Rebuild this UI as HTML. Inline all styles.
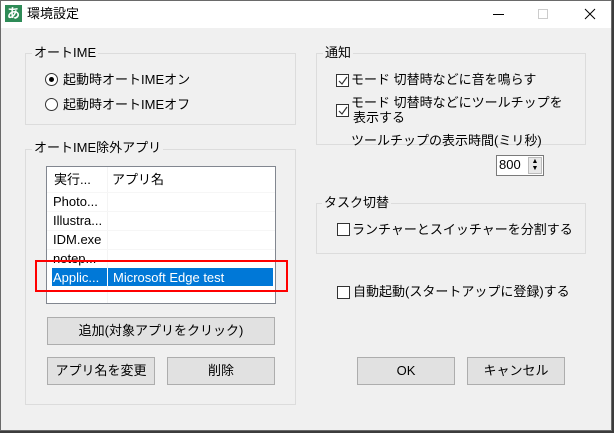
<!DOCTYPE html>
<html><head><meta charset="utf-8"><style>
*{margin:0;padding:0;box-sizing:border-box}
body{width:614px;height:433px;background:#3c3c3c;position:relative;overflow:hidden;font-family:"Liberation Sans","Noto Sans CJK JP",sans-serif;font-size:13px;color:#000}
.win{position:absolute;left:0;top:0;width:612px;height:431px;background:#f0f0f0;border:1px solid #6a6a6a}
.title{position:absolute;left:0;top:0;width:610px;height:27px;background:#fff}
.a{position:absolute;}
.grp{position:absolute;border:1px solid #dcdcdc}
.lbl{position:absolute;background:#f0f0f0;padding:0 2px;line-height:16px;white-space:nowrap}
.t{position:absolute;white-space:nowrap;line-height:16px}
.btn{position:absolute;background:#e1e1e1;border:1px solid #adadad;text-align:center;line-height:25px}
.cb{position:absolute;width:13px;height:13px;border:1px solid #333;background:#fff}
.radio{position:absolute;width:13px;height:13px;border:1px solid #333;border-radius:50%;background:#fff}
</style></head><body>
<div class="win">
<div class="title">
 <div class="a" style="left:4px;top:4px;width:17px;height:17px;background:#2e8b57;color:#fff;font-size:13px;line-height:17px;text-align:center;font-weight:bold">あ</div>
 <div class="t" style="left:26px;top:5px">環境設定</div>
 <div class="a" style="left:492px;top:13px;width:11px;height:1px;background:#000"></div>
 <div class="a" style="left:537px;top:8px;width:10px;height:10px;border:1px solid #ccc"></div>
 <svg class="a" style="left:583px;top:7px" width="12" height="12"><path d="M1 1L11 11M11 1L1 11" stroke="#000" stroke-width="1"/></svg>
</div>

<div class="grp" style="left:24px;top:52px;width:271px;height:72px"></div>
<div class="lbl" style="left:31px;top:44px">オートIME</div>
<div class="radio" style="left:44px;top:72px"><div class="a" style="left:3px;top:3px;width:5px;height:5px;border-radius:50%;background:#000"></div></div>
<div class="t" style="left:62px;top:71px">起動時オートIMEオン</div>
<div class="radio" style="left:44px;top:97px"></div>
<div class="t" style="left:62px;top:96px">起動時オートIMEオフ</div>

<div class="grp" style="left:24px;top:148px;width:271px;height:256px"></div>
<div class="lbl" style="left:31px;top:139px">オートIME除外アプリ</div>
<div class="a" style="left:45px;top:165px;width:230px;height:138px;background:#fff;border:1px solid #828790"></div>
<div class="a" style="left:106px;top:166px;width:1px;height:136px;background:#f4f4f4"></div>
<div class="a" style="left:46px;top:191px;width:228px;height:1px;background:#f6f6f6"></div>
<div class="a" style="left:46px;top:210px;width:228px;height:1px;background:#f6f6f6"></div>
<div class="a" style="left:46px;top:229px;width:228px;height:1px;background:#f6f6f6"></div>
<div class="a" style="left:46px;top:248px;width:228px;height:1px;background:#f6f6f6"></div>
<div class="t" style="left:53px;top:171px">実行...</div>
<div class="t" style="left:111px;top:171px">アプリ名</div>
<div class="t" style="left:52px;top:193px">Photo...</div>
<div class="t" style="left:52px;top:212px">Illustra...</div>
<div class="t" style="left:52px;top:231px">IDM.exe</div>
<div class="t" style="left:52px;top:250px">notep...</div>
<div class="a" style="left:51px;top:267px;width:221px;height:18px;background:#0078d7"></div>
<div class="a" style="left:106px;top:267px;width:1px;height:18px;background:#fff"></div>
<div class="t" style="left:52px;top:269px;color:#fff">Applic...</div>
<div class="t" style="left:112px;top:269px;color:#fff">Microsoft Edge test</div>
<div class="a" style="left:34px;top:259px;width:253px;height:32px;border:2px solid #f00"></div>

<div class="btn" style="left:46px;top:316px;width:228px;height:28px">追加(対象アプリをクリック)</div>
<div class="btn" style="left:46px;top:356px;width:108px;height:28px">アプリ名を変更</div>
<div class="btn" style="left:166px;top:356px;width:108px;height:28px">削除</div>

<div class="grp" style="left:315px;top:52px;width:270px;height:92px"></div>
<div class="lbl" style="left:322px;top:44px">通知</div>
<div class="cb" style="left:335px;top:73px"></div><svg class="a" style="left:337px;top:75px" width="10" height="10"><path d="M1 5L4 8L9 1" stroke="#333" fill="none" stroke-width="1.2"/></svg>
<div class="t" style="left:350px;top:71px">モード 切替時などに音を鳴らす</div>
<div class="cb" style="left:335px;top:103px"></div><svg class="a" style="left:337px;top:105px" width="10" height="10"><path d="M1 5L4 8L9 1" stroke="#333" fill="none" stroke-width="1.2"/></svg>
<div class="t" style="left:350px;top:94px">モード 切替時などにツールチップを</div>
<div class="t" style="left:352px;top:109px">表示する</div>
<div class="t" style="left:350px;top:132px">ツールチップの表示時間(ミリ秒)</div>
<div class="a" style="left:495px;top:154px;width:48px;height:21px;background:#fff;border:1px solid #7a7a7a"></div>
<div class="t" style="left:498px;top:156px">800</div>
<div class="a" style="left:527px;top:156px;width:14px;height:17px;background:#e8e8e8;border:1px solid #bbb;font-size:7px;line-height:7px;text-align:center">▲<br>▼</div>

<div class="grp" style="left:315px;top:202px;width:270px;height:51px"></div>
<div class="lbl" style="left:321px;top:194px">タスク切替</div>
<div class="cb" style="left:336px;top:222px"></div>
<div class="t" style="left:351px;top:221px">ランチャーとスイッチャーを分割する</div>

<div class="cb" style="left:336px;top:285px"></div>
<div class="t" style="left:352px;top:283px">自動起動(スタートアップに登録)する</div>

<div class="btn" style="left:356px;top:356px;width:98px;height:28px">OK</div>
<div class="btn" style="left:466px;top:356px;width:98px;height:28px">キャンセル</div>
</div>
</body></html>
